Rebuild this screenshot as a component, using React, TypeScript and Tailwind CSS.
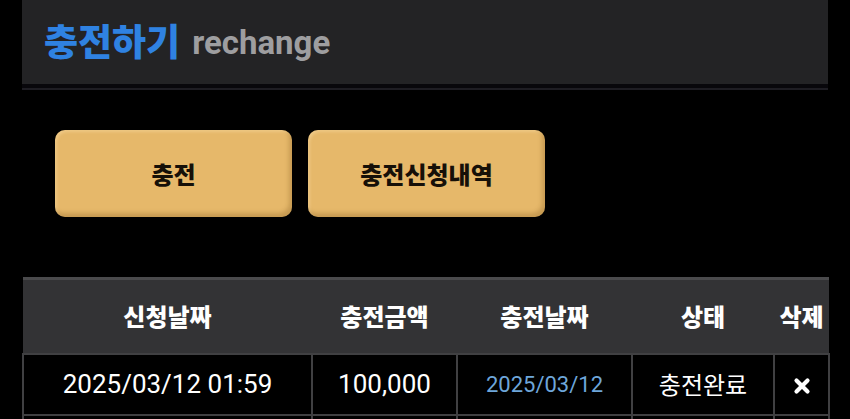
const KR = "font-['Noto_Sans_CJK_KR','Noto_Sans',sans-serif]";
const NUM = "font-['Roboto','Noto_Sans_CJK_KR',sans-serif]";

type Row = { requested: string; amount: string; charged: string; status: string };

const rows: Row[] = [
  { requested: "2025/03/12 01:59", amount: "100,000", charged: "2025/03/12", status: "충전완료" },
];

function CloseIcon() {
  return (
    <svg width="18" height="18" viewBox="0 0 18 18" className="inline-block">
      <path d="M3.5 3.5 L14.5 14.5 M14.5 3.5 L3.5 14.5" stroke="white" strokeWidth="4.2" strokeLinecap="round" />
    </svg>
  );
}

function GoldButton({ children }: { children: string }) {
  return (
    <button
      className={`${KR} w-[237px] h-[87px] rounded-[10px] bg-[#e6b86a] text-[#161008] text-[24px] font-black shadow-[inset_-3px_-4px_4px_rgba(120,80,20,0.28),inset_2px_2px_3px_rgba(255,230,180,0.35)]`}
    >
      {children}
    </button>
  );
}

const cell = "border-2 border-[#404042] text-center";

export default function App() {
  return (
    <div className="min-h-screen bg-black">
      <div className="mx-[22px]">
        <div className="h-[84px] bg-[#232325] flex items-center pl-[22px] gap-[12px]">
          <span className={`${KR} text-[37px] font-black text-[#2f82e2] leading-none mt-[-4px]`}>충전하기</span>
          <span className={`${NUM} text-[33px] font-bold text-[#9e9ea0] leading-none`}>rechange</span>
        </div>
        <div className="h-[4px] bg-[#08070b]" />
        <div className="h-[2px] bg-[#1e1d23]" />

        <div className="flex gap-[16px] pl-[33px] pt-[40px]">
          <GoldButton>충전</GoldButton>
          <GoldButton>충전신청내역</GoldButton>
        </div>

        <table className="mt-[60px] w-[806px] table-fixed border-collapse">
          <colgroup>
            <col className="w-[289px]" />
            <col className="w-[145px]" />
            <col className="w-[175px]" />
            <col className="w-[142px]" />
            <col className="w-[55px]" />
          </colgroup>
          <thead>
            <tr className="bg-[#333335] border-t-[3px] border-[#4a4a4c]">
              {["신청날짜", "충전금액", "충전날짜", "상태", "삭제"].map((h) => (
                <th key={h} className={`${KR} h-[75px] text-center text-[24px] font-black text-white`}>
                  {h}
                </th>
              ))}
            </tr>
          </thead>
          <tbody>
            {rows.map((r) => (
              <tr key={r.requested}>
                <td className={`${NUM} ${cell} h-[61px] text-[26px] text-white`}>{r.requested}</td>
                <td className={`${NUM} ${cell} text-[26px] text-white`}>{r.amount}</td>
                <td className={`${NUM} ${cell} text-[22px] text-[#6ea6da]`}>{r.charged}</td>
                <td className={`${KR} ${cell} text-[24px] text-white`}>{r.status}</td>
                <td className={cell}>
                  <CloseIcon />
                </td>
              </tr>
            ))}
            <tr>
              <td className={`${cell} h-[40px]`} />
              <td className={cell} />
              <td className={cell} />
              <td className={cell} />
              <td className={cell} />
            </tr>
          </tbody>
        </table>
      </div>
    </div>
  );
}
